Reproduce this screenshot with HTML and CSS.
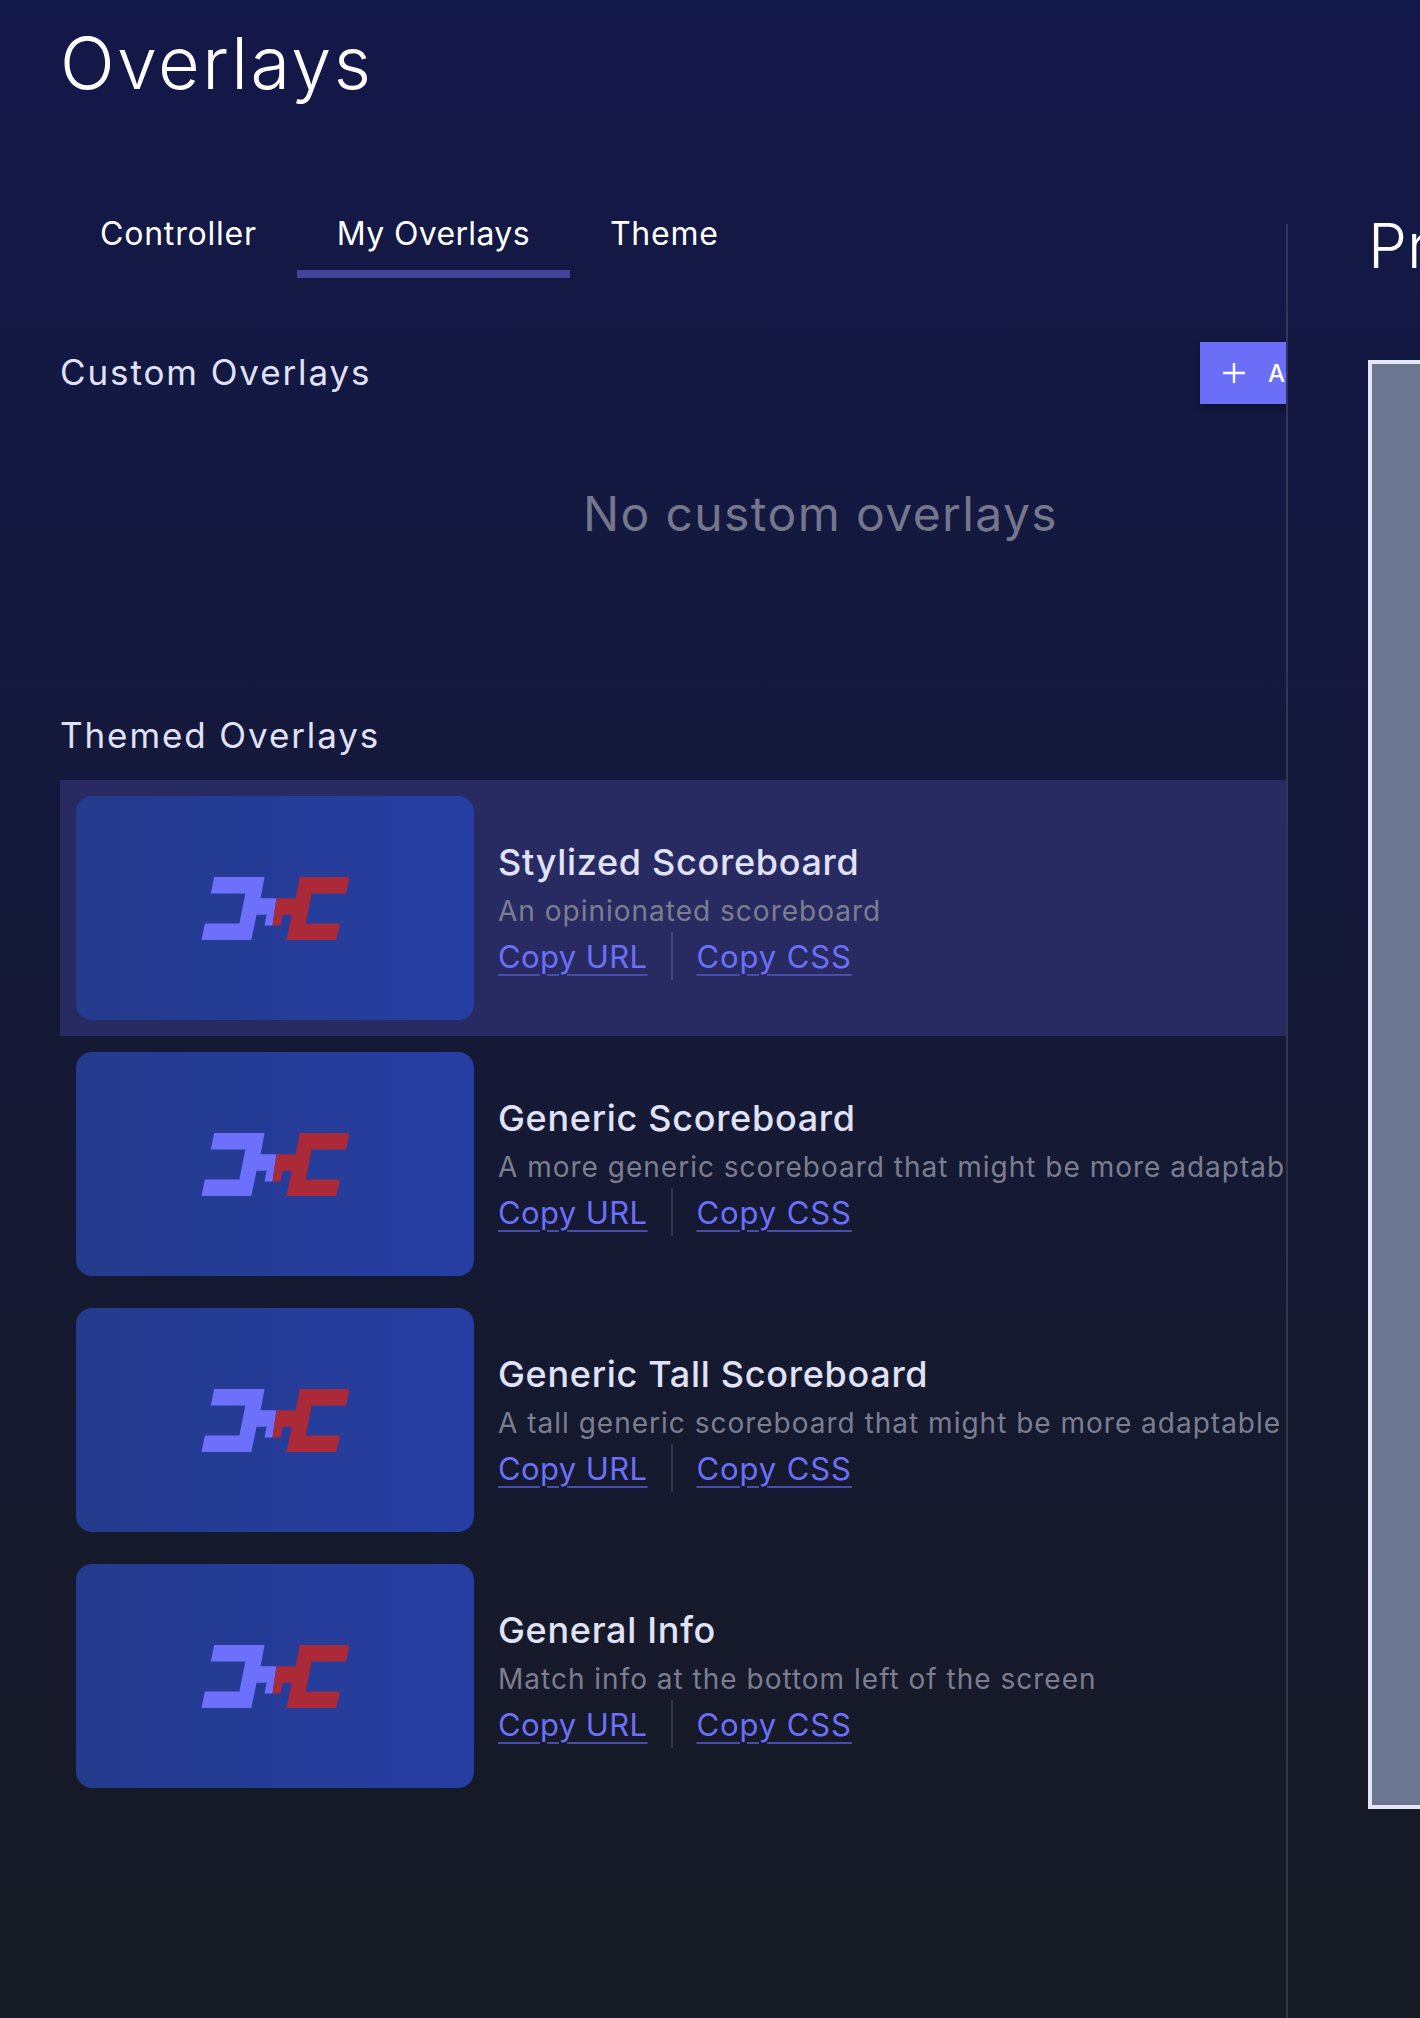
FILE: index.html
```html
<!DOCTYPE html>
<html lang="en">
<head>
<meta charset="UTF-8">
<meta name="viewport" content="width=device-width, initial-scale=1">
<title>Overlays</title>
<link rel="stylesheet" href="styles.css">
</head>
<body>
<svg class="defs" width="0" height="0" aria-hidden="true">
  <symbol id="logo" viewBox="122 78 446 190">
    <polygon fill="#6c70fa" points="160,78 312,78 300,142 348,142 336,224 312,224 318,192 288,192 272,268 122,268 132,218 236,218 254,128 150,128"/>
    <polygon fill="#ac2a37" points="418,78 568,78 558,128 454,128 436,218 540,218 528,268 378,268 394,192 366,192 360,224 336,224 348,142 406,142"/>
  </symbol>
</svg>

<h1 class="page-title">Overlays</h1>

<div class="columns">
  <section class="left-pane">
    <div class="left-inner">
      <nav class="tabs">
        <a class="tab">Controller</a>
        <a class="tab active">My Overlays</a>
        <a class="tab">Theme</a>
      </nav>

      <div class="section-head">
        <h2>Custom Overlays</h2>
        <button class="add-btn">
          <svg width="24" height="24" viewBox="0 0 24 24"><path d="M12 2v20M1 12h22" stroke="#fff" stroke-width="2.4" fill="none"/></svg>
          <span>Add Custom Overlay</span>
        </button>
      </div>
      <p class="empty">No custom overlays</p>

      <h2 class="themed-head">Themed Overlays</h2>
      <div class="overlay-list">
        <div class="overlay-row selected">
          <div class="thumb"><svg class="logo"><use href="#logo"/></svg></div>
          <div class="info">
            <h3>Stylized Scoreboard</h3>
            <p>An opinionated scoreboard</p>
            <div class="links"><a>Copy URL</a><i></i><a>Copy CSS</a></div>
          </div>
        </div>
        <div class="overlay-row">
          <div class="thumb"><svg class="logo"><use href="#logo"/></svg></div>
          <div class="info">
            <h3>Generic Scoreboard</h3>
            <p>A more generic scoreboard that might be more adaptable</p>
            <div class="links"><a>Copy URL</a><i></i><a>Copy CSS</a></div>
          </div>
        </div>
        <div class="overlay-row">
          <div class="thumb"><svg class="logo"><use href="#logo"/></svg></div>
          <div class="info">
            <h3>Generic Tall Scoreboard</h3>
            <p>A tall generic scoreboard that might be more adaptable</p>
            <div class="links"><a>Copy URL</a><i></i><a>Copy CSS</a></div>
          </div>
        </div>
        <div class="overlay-row">
          <div class="thumb"><svg class="logo"><use href="#logo"/></svg></div>
          <div class="info">
            <h3>General Info</h3>
            <p>Match info at the bottom left of the screen</p>
            <div class="links"><a>Copy URL</a><i></i><a>Copy CSS</a></div>
          </div>
        </div>
      </div>
    </div>
  </section>

  <section class="preview-pane">
    <h2 class="preview-title">Preview</h2>
    <div class="preview-box"></div>
  </section>
</div>
</body>
</html>
```

FILE: styles.css
```css
* { box-sizing: border-box; font-family: "Inter", "Open Sans", sans-serif; }
html, body { margin: 0; height: 2018px; overflow: hidden; }
body { background: linear-gradient(#13184a, #161a23); color: #fff; }
.defs { display: block; height: 0; }
h1, h2, h3, p { margin: 0; font-weight: 400; }

.page-title { height: 188px; padding: 23px 0 0 60px; font-size: 72px; line-height: 80px; font-weight: 350; letter-spacing: 2.4px; }

.columns { display: flex; height: 1830px; }
.left-pane { flex: none; width: 1286px; overflow: hidden; padding-left: 60px; }
.left-inner { width: 1521px; }

.tabs { display: flex; height: 90px; }
.tab { padding: 27px 40px 0; font-size: 32px; line-height: 38px; letter-spacing: 0.8px; border-bottom: 8px solid transparent; }
.tab.active { letter-spacing: 0.35px; border-bottom-color: #42449a; }

.section-head { display: flex; justify-content: space-between; align-items: center; margin-top: 64px; height: 62px; }
.section-head h2, .themed-head { position: relative; top: -1px; font-size: 35px; line-height: 44px; letter-spacing: 1.9px; color: #e0e2f8; }
.add-btn { display: flex; align-items: center; gap: 22px; width: 381px; height: 62px; padding: 0 22px; border: 0; background: #6b6ff8; color: #fff; font-size: 24px; font-weight: 500; box-shadow: 0 4px 8px rgba(0,0,0,0.3); }

.empty { margin-top: 78px; text-align: center; font-size: 48px; line-height: 64px; letter-spacing: 1.4px; color: #74768c; }

.themed-head { margin-top: 168px; }
.overlay-list { margin-top: 22px; }
.overlay-row { display: flex; align-items: center; height: 256px; padding: 16px; gap: 24px; }
.overlay-row.selected { background: #282b62; }
.thumb { flex: none; display: flex; align-items: center; justify-content: center; width: 398px; height: 224px; border-radius: 16px; background: linear-gradient(90deg, #243a8c, #263ea3); }
.logo { width: 149px; height: 63px; }

.info { position: relative; top: 2px; }
.info h3 { position: relative; top: -2px; font-size: 36px; line-height: 48px; font-weight: 500; letter-spacing: 0.7px; color: #e0e2f8; white-space: nowrap; }
.info p { margin-top: 3px; font-size: 28px; line-height: 40px; letter-spacing: 1px; color: #7c7e90; white-space: nowrap; }
.links { display: flex; align-items: center; height: 48px; margin-top: 1px; font-size: 31px; letter-spacing: 0.4px; color: #6c70f8; }
.links a { text-decoration: underline; text-decoration-color: #4a4caa; text-decoration-thickness: 2px; text-underline-offset: 6px; }
.links a:last-child { letter-spacing: 0.9px; }
.links i { width: 2px; height: 48px; margin: 0 24px 0 23px; background: rgba(255,255,255,0.13); }

.preview-pane { flex: none; margin-top: 36px; padding-left: 80px; border-left: 2px solid rgba(255,255,255,0.13); }
.preview-title { height: 136px; font-size: 62px; line-height: 44px; font-weight: 350; white-space: nowrap; }
.preview-box { width: 2576px; height: 1449px; border: 4px solid #e5e6f8; background: #6b7690; }
```
